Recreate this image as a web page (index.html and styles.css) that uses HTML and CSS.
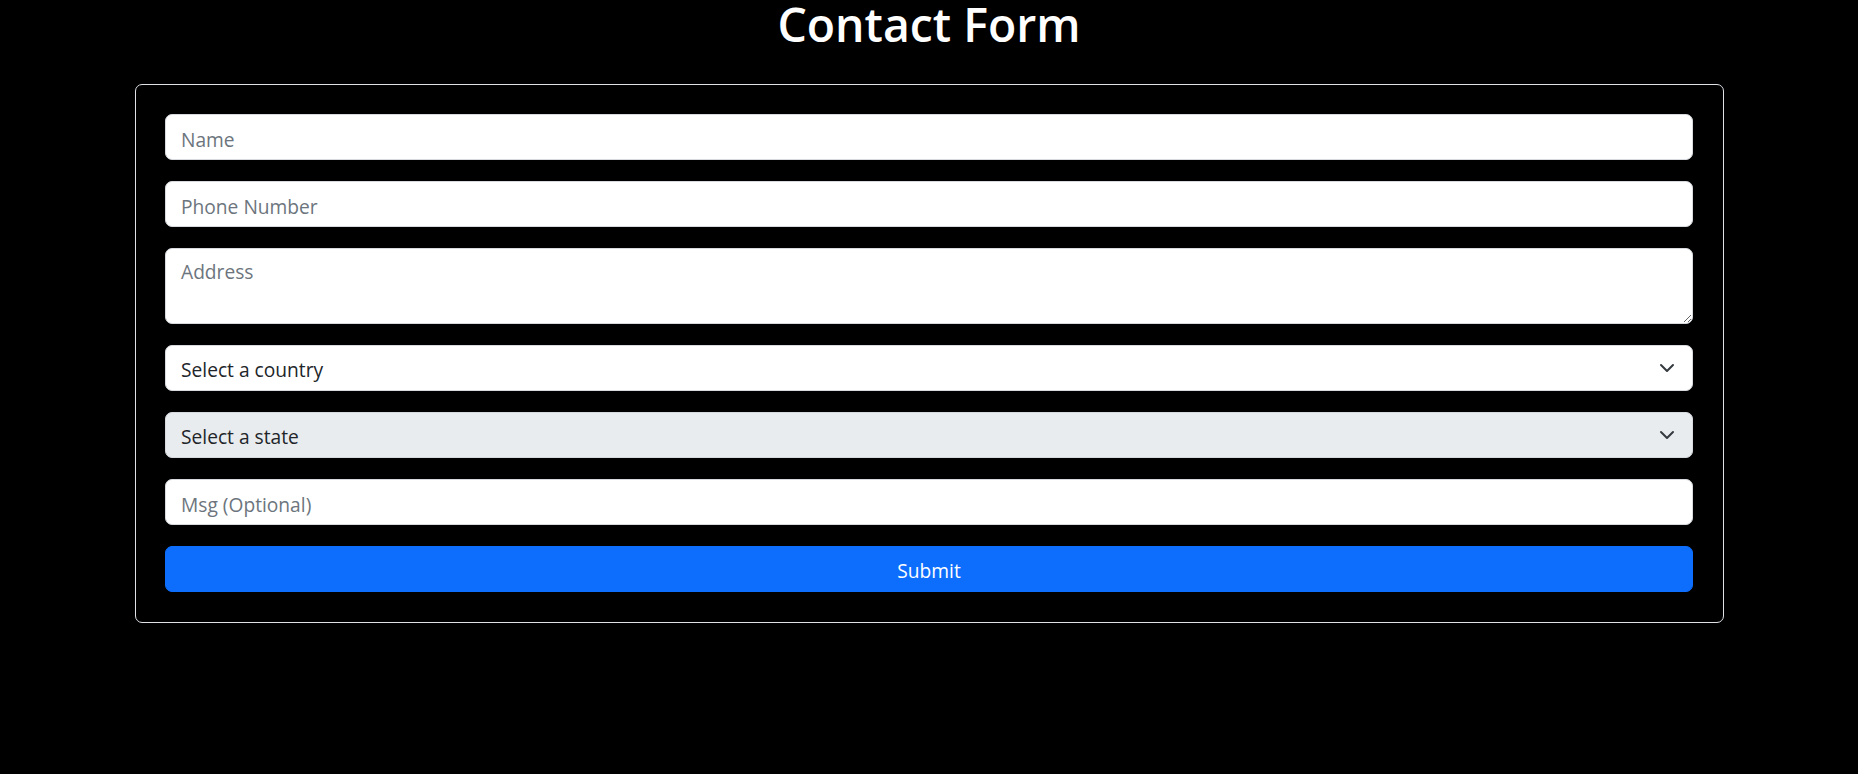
FILE: index.html
```html
<!DOCTYPE html>
<html lang="en">
<head>
<meta charset="utf-8">
<title>Contact Form</title>
<link rel="stylesheet" href="styles.css">
</head>
<body>
  <h1 class="title">Contact Form</h1>
  <div class="card">
    <form class="form">
      <input class="field" type="text" placeholder="Name">
      <input class="field" type="tel" placeholder="Phone Number">
      <textarea class="field area" placeholder="Address"></textarea>
      <div class="select-wrap">
        <select class="field select">
          <option>Select a country</option>
        </select>
        <svg class="chevron" width="16" height="16" viewBox="0 0 16 16"><path d="M2 5l6 6 6-6" fill="none" stroke="#343a40" stroke-width="2" stroke-linecap="round" stroke-linejoin="round"/></svg>
      </div>
      <div class="select-wrap">
        <select class="field select" disabled>
          <option>Select a state</option>
        </select>
        <svg class="chevron" width="16" height="16" viewBox="0 0 16 16"><path d="M2 5l6 6 6-6" fill="none" stroke="#343a40" stroke-width="2" stroke-linecap="round" stroke-linejoin="round"/></svg>
      </div>
      <input class="field" type="text" placeholder="Msg (Optional)">
      <button class="submit" type="button">Submit</button>
    </form>
  </div>
</body>
</html>
```
FILE: styles.css
```css
html, body {
  margin: 0;
  padding: 0;
  background: #000;
}
body {
  font-family: "Open Sans", "Noto Sans", sans-serif;
  color: #212529;
}
.title {
  margin: 0;
  text-align: center;
  color: #fff;
  font-size: 46.4px;
  font-weight: 600;
  line-height: 48px;
}
.card {
  box-sizing: border-box;
  width: 1589px;
  margin: 36px auto 0;
  border: 1px solid #dee2e6;
  border-radius: 7px;
  padding: 29px 29.5px 30px;
}
.form {
  display: flex;
  flex-direction: column;
  gap: 21px;
}
.field {
  box-sizing: border-box;
  display: block;
  width: 100%;
  height: 46px;
  margin: 0;
  padding: 4px 15px 0;
  border: 1px solid #d6dade;
  border-radius: 7px;
  background: #fff;
  font-family: "Open Sans", "Noto Sans", sans-serif;
  font-size: 19.2px;
  line-height: 28.8px;
  color: #212529;
  outline: none;
}
.field::placeholder {
  color: #6c757d;
  opacity: 1;
}
.area {
  height: 76px;
  padding: 9px 15px 5px;
  resize: vertical;
}
.select-wrap {
  position: relative;
}
.select {
  appearance: none;
  -webkit-appearance: none;
  padding-right: 50px;
}
.select:disabled {
  background: #e9ecef;
  color: #212529;
  opacity: 1;
}
.chevron {
  position: absolute;
  right: 18px;
  top: 15px;
  pointer-events: none;
}
.submit {
  box-sizing: border-box;
  display: block;
  width: 100%;
  height: 46px;
  margin: 0;
  padding: 4px 15px 0;
  border: 1px solid #0d6efd;
  border-radius: 7px;
  background: #0d6efd;
  color: #fff;
  font-family: "Open Sans", "Noto Sans", sans-serif;
  font-size: 19.2px;
  line-height: 28.8px;
  cursor: pointer;
}
```
